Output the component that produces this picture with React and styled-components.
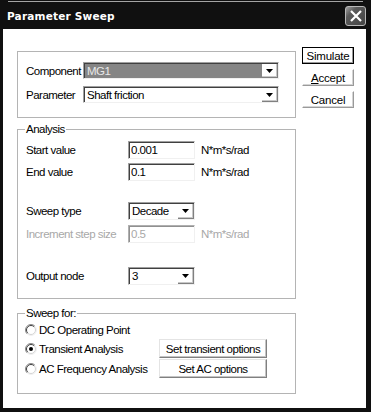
import React from "react";
import styled, { createGlobalStyle, css } from "styled-components";

const GlobalStyle = createGlobalStyle`
  html, body { margin: 0; padding: 0; background: #101010; }
  body {
    width: 371px; height: 412px; overflow: hidden;
    font-family: "Liberation Sans", Arial, sans-serif;
  }
  * { box-sizing: border-box; }
`;

const uiFont = css`
  font-family: "Liberation Sans", Arial, sans-serif;
  font-size: 11.5px;
  letter-spacing: -0.5px;
`;

const Window = styled.div`
  width: 371px;
  height: 412px;
  background: #101010;
  display: flex;
  flex-direction: column;
  padding: 0 5px 4px 3px;
`;

const TitleBar = styled.div`
  height: 29px;
  display: flex;
  flex-direction: column;
`;

const TopRule = styled.div`
  height: 1px;
  margin: 1px 3px 0 5px;
  background: #a4a4a4;
`;

const TitleRow = styled.div`
  flex: 1;
  display: flex;
  justify-content: space-between;
  align-items: flex-start;
  padding-left: 4px;
`;

const TitleText = styled.div`
  margin-top: 8px;
  font-family: "DejaVu Sans", Verdana, sans-serif;
  font-weight: bold;
  font-size: 10.5px;
  line-height: 13px;
  color: #fff;
  letter-spacing: 0.2px;
`;

const CloseButton = styled.div`
  margin-top: 4px;
  width: 21px;
  height: 20px;
  border: 1px solid #b8b8b8;
  border-radius: 3px;
  background: linear-gradient(135deg, #a0a0a0 0%, #5a5a5a 30%, #444 100%);
  display: flex;
  align-items: center;
  justify-content: center;
`;

const Client = styled.div`
  height: 379px;
  background: #fff;
  display: flex;
  align-items: flex-start;
  gap: 6px;
  padding: 18px 0 0 14px;
`;

const LeftCol = styled.div`
  margin-top: 4px;
  width: 279px;
  display: flex;
  flex-direction: column;
`;

const Group = styled.div`
  position: relative;
  border: 1px solid #b4b4b4;
  padding: ${(p) => p.$pad};
  margin-top: ${(p) => p.$mt || 0}px;
`;

const Legend = styled.span`
  ${uiFont};
  position: absolute;
  top: -8px;
  left: 7px;
  padding: 0 1px;
  background: #fff;
  line-height: 14px;
  color: #000;
`;

const Stack = styled.div`
  display: flex;
  flex-direction: column;
  gap: ${(p) => p.$gap}px;
`;

const ComboRow = styled.div`
  display: grid;
  grid-template-columns: 57px 196px;
  align-items: center;
  height: 17px;
`;

const Label = styled.span`
  ${uiFont};
  line-height: 14px;
  color: ${(p) => (p.$disabled ? "#a8a8a8" : "#000")};
  white-space: nowrap;
`;

const sunken = css`
  border-top: 1px solid #a0a0a0;
  border-left: 1px solid #a0a0a0;
  border-right: 1px solid #f0f0f0;
  border-bottom: 1px solid #f0f0f0;
  box-shadow: inset 1px 1px 0 #404040;
`;

const Combo = styled.div`
  ${sunken};
  width: ${(p) => p.$w}px;
  height: ${(p) => p.$h || 18}px;
  display: flex;
  align-items: stretch;
  background: ${(p) => (p.$selected ? "#858585" : "#fff")};
`;

const ComboText = styled.span`
  ${uiFont};
  flex: 1;
  padding: 0 0 0 3px;
  display: flex;
  align-items: center;
  color: ${(p) => (p.$selected ? "#e8e8e8" : "#000")};
  white-space: nowrap;
`;

const ArrowButton = styled.span`
  width: 16px;
  margin: 1px 0 0 0;
  background: #fff;
  border-right: 1px solid #808080;
  border-bottom: 1px solid #808080;
  box-shadow: inset -1px -1px 0 #c8c8c8;
  display: flex;
  align-items: center;
  justify-content: center;
`;

const FormRow = styled.div`
  display: grid;
  grid-template-columns: 96px 67px auto;
  column-gap: 6px;
  align-items: center;
  height: 18px;
  margin-top: ${(p) => p.$mt || 0}px;
`;

const TextInput = styled.input`
  ${sunken};
  ${uiFont};
  width: 67px;
  height: 18px;
  margin: 0;
  padding: 0 0 0 2px;
  outline: none;
  background: #fff;
  color: #000;
  &:disabled {
    color: #a8a8a8;
    background: #fff;
    border-top-color: #b0b0b0;
    border-left-color: #b0b0b0;
    box-shadow: inset 1px 1px 0 #909090;
  }
`;

const RadioGrid = styled.div`
  display: grid;
  grid-template-columns: 133px 108px;
  grid-template-rows: 17px 19px 19px;
  row-gap: 1px;
  align-items: center;
`;

const RadioLabel = styled.label`
  ${uiFont};
  display: flex;
  align-items: center;
  gap: 2px;
  margin-left: -1px;
  color: #000;
  grid-column: ${(p) => (p.$span ? "1 / -1" : "auto")};
  white-space: nowrap;
  svg { flex: none; }
`;

const PushButton = styled.div`
  ${uiFont};
  width: 108px;
  height: 19px;
  background: #fff;
  border-style: solid;
  border-width: 1px;
  border-color: #e4e4e4 #808080 #808080 #e4e4e4;
  box-shadow: inset -1px -1px 0 #c4c4c4;
  display: flex;
  align-items: center;
  justify-content: center;
  color: #000;
  white-space: nowrap;
`;

const ButtonCol = styled.div`
  width: 52px;
  display: flex;
  flex-direction: column;
  gap: 5px;
`;

const DialogButton = styled.div`
  ${uiFont};
  letter-spacing: -0.2px;
  height: 17px;
  background: #fff;
  border: 1px solid ${(p) => (p.$default ? "#000" : "#fff")};
  border-right-color: ${(p) => (p.$default ? "#000" : "#9a9a9a")};
  border-bottom-color: ${(p) => (p.$default ? "#000" : "#9a9a9a")};
  box-shadow: ${(p) =>
    p.$default ? "inset -1px -1px 0 #9a9a9a" : "inset -1px -1px 0 #d4d4d4"};
  display: flex;
  align-items: center;
  justify-content: center;
  color: #000;
  u { text-decoration: underline; }
`;

const Arrow = () => (
  <svg width="7" height="4" viewBox="0 0 7 4">
    <path d="M0 0H7L3.5 4Z" fill="#000" />
  </svg>
);

const Radio = ({ checked }) => (
  <svg width="12" height="12" viewBox="0 0 12 12">
    <circle cx="6" cy="6" r="5" fill="#fff" />
    <path d="M2.1 9.9A5.5 5.5 0 0 1 9.9 2.1" stroke="#8a8a8a" fill="none" />
    <path d="M2.8 9.2A4.5 4.5 0 0 1 9.2 2.8" stroke="#404040" fill="none" />
    <path d="M9.9 2.1A5.5 5.5 0 0 1 2.1 9.9" stroke="#f0f0f0" fill="none" />
    <path d="M9.2 2.8A4.5 4.5 0 0 1 2.8 9.2" stroke="#d4d4d4" fill="none" />
    {checked && <circle cx="6" cy="6" r="2" fill="#000" />}
  </svg>
);

const ComboBox = ({ w, h, value, selected }) => (
  <Combo $w={w} $h={h} $selected={selected}>
    <ComboText $selected={selected}>{value}</ComboText>
    <ArrowButton>
      <Arrow />
    </ArrowButton>
  </Combo>
);

export default function App() {
  return (
    <>
      <GlobalStyle />
      <Window>
        <TitleBar>
          <TopRule />
          <TitleRow>
            <TitleText>Parameter Sweep</TitleText>
            <CloseButton>
              <svg width="12" height="12" viewBox="0 0 12 12">
                <path d="M1 1L11 11M11 1L1 11" stroke="#fff" strokeWidth="2.2" />
              </svg>
            </CloseButton>
          </TitleRow>
        </TitleBar>
        <Client>
          <LeftCol>
            <Group $pad="10px 15px 14px 8px">
              <Stack $gap={7}>
                <ComboRow>
                  <Label>Component</Label>
                  <ComboBox w={196} h={17} value="MG1" selected />
                </ComboRow>
                <ComboRow>
                  <Label>Parameter</Label>
                  <ComboBox w={196} h={17} value="Shaft friction" />
                </ComboRow>
              </Stack>
            </Group>

            <Group $pad="11px 0 13px 8px" $mt={11}>
              <Legend>Analysis</Legend>
              <FormRow>
                <Label>Start value</Label>
                <TextInput readOnly value="0.001" />
                <Label>N*m*s/rad</Label>
              </FormRow>
              <FormRow $mt={4}>
                <Label>End value</Label>
                <TextInput readOnly value="0.1" />
                <Label>N*m*s/rad</Label>
              </FormRow>
              <FormRow $mt={21}>
                <Label>Sweep type</Label>
                <ComboBox w={67} value="Decade" />
              </FormRow>
              <FormRow $mt={5}>
                <Label $disabled>Increment step size</Label>
                <TextInput disabled value="0.5" />
                <Label $disabled>N*m*s/rad</Label>
              </FormRow>
              <FormRow $mt={24}>
                <Label>Output node</Label>
                <ComboBox w={67} value="3" />
              </FormRow>
            </Group>

            <Group $pad="7px 0 15px 8px" $mt={14}>
              <Legend>Sweep for:</Legend>
              <RadioGrid>
                <RadioLabel $span>
                  <Radio />
                  DC Operating Point
                </RadioLabel>
                <RadioLabel>
                  <Radio checked />
                  Transient Analysis
                </RadioLabel>
                <PushButton>Set transient options</PushButton>
                <RadioLabel>
                  <Radio />
                  AC Frequency Analysis
                </RadioLabel>
                <PushButton>Set AC options</PushButton>
              </RadioGrid>
            </Group>
          </LeftCol>

          <ButtonCol>
            <DialogButton $default>Simulate</DialogButton>
            <DialogButton>
              <span>
                <u>A</u>ccept
              </span>
            </DialogButton>
            <DialogButton>Cancel</DialogButton>
          </ButtonCol>
        </Client>
      </Window>
    </>
  );
}
